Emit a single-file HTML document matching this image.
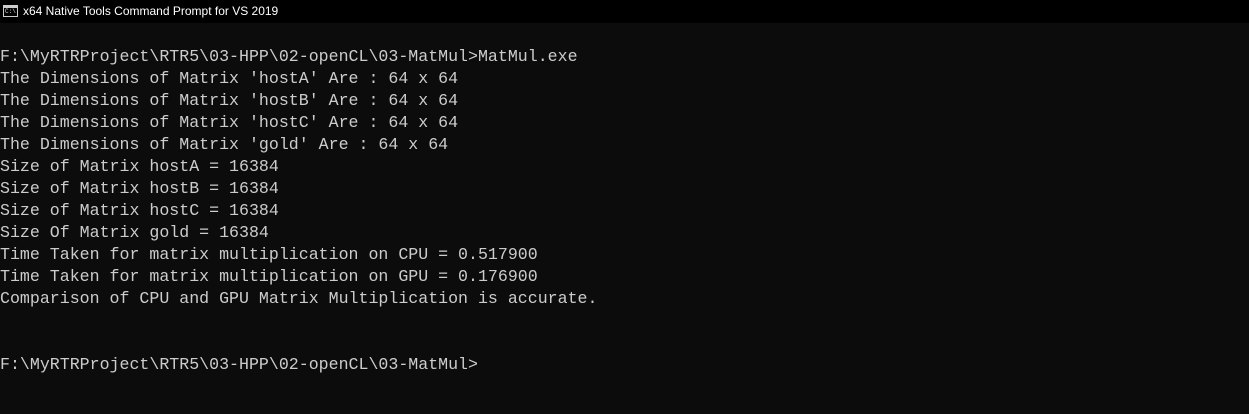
<!DOCTYPE html>
<html><head><style>
html,body{margin:0;padding:0;width:1249px;height:414px;overflow:hidden;background:#0c0c0c;}
.tb{position:absolute;left:0;top:0;width:1249px;height:23px;background:#000;color:#fff;font:12px "Liberation Sans",sans-serif;}
.tb .ic{position:absolute;left:3px;top:5px;width:15px;height:12px;border:1px solid #ccc;box-sizing:border-box;background:#000;}
.tb .ic:before{content:"";position:absolute;left:0;top:0;right:0;height:2px;background:#ccc;}
.tb .ic span{position:absolute;left:1px;top:2px;font:6px "Liberation Mono",monospace;color:#ddd;}
.tb .t{position:absolute;left:23px;top:4px;}
pre{position:absolute;left:0;top:46px;margin:0;font:16.6px/22px "Liberation Mono",monospace;color:#cccccc;}
</style></head><body>
<div class="tb"><div class="ic"><span>C:\</span></div><div class="t">x64 Native Tools Command Prompt for VS 2019</div></div>
<pre>F:\MyRTRProject\RTR5\03-HPP\02-openCL\03-MatMul>MatMul.exe
The Dimensions of Matrix 'hostA' Are : 64 x 64
The Dimensions of Matrix 'hostB' Are : 64 x 64
The Dimensions of Matrix 'hostC' Are : 64 x 64
The Dimensions of Matrix 'gold' Are : 64 x 64
Size of Matrix hostA = 16384
Size of Matrix hostB = 16384
Size of Matrix hostC = 16384
Size Of Matrix gold = 16384
Time Taken for matrix multiplication on CPU = 0.517900
Time Taken for matrix multiplication on GPU = 0.176900
Comparison of CPU and GPU Matrix Multiplication is accurate.


F:\MyRTRProject\RTR5\03-HPP\02-openCL\03-MatMul></pre>
</body></html>
